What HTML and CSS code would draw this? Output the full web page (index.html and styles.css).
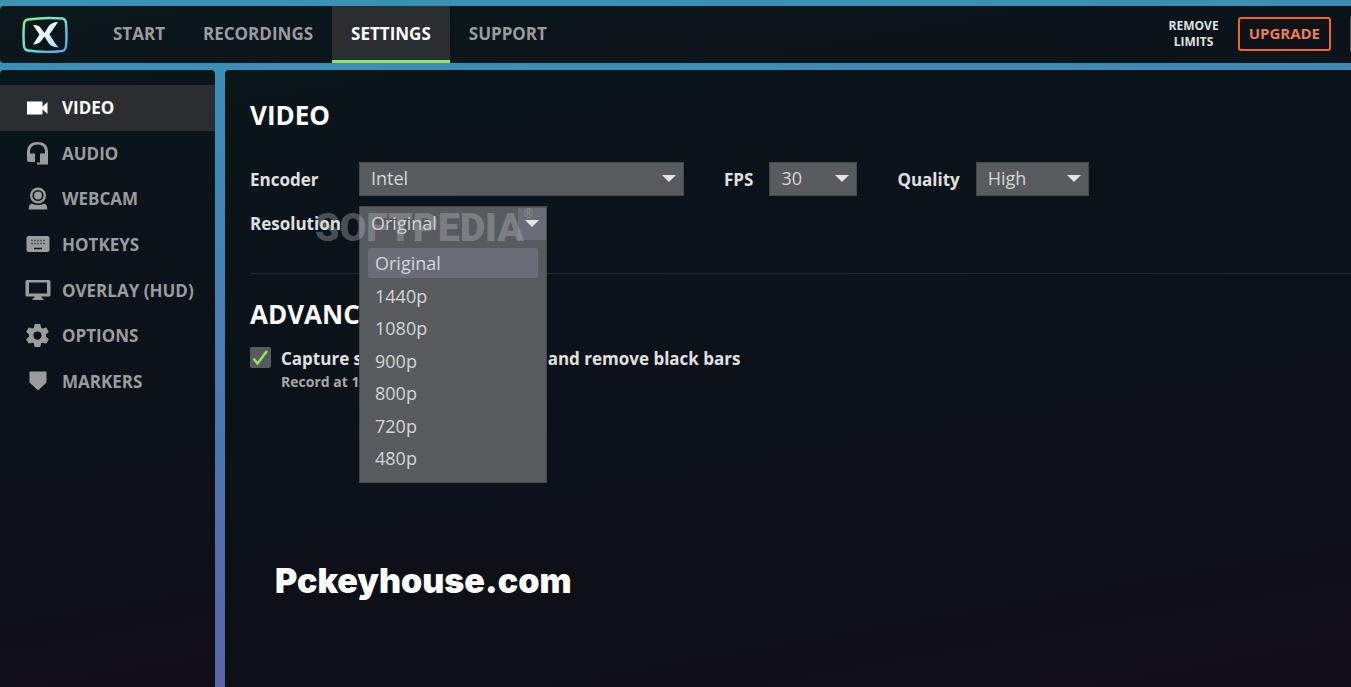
FILE: index.html
```html
<!DOCTYPE html>
<html lang="en">
<head>
    <meta charset="UTF-8">
    <meta name="viewport" content="width=device-width, initial-scale=1.0">
    <title>Settings - Video</title>
    <link rel="stylesheet" href="styles.css">
</head>
<body>
    <header class="topbar">
        <a class="logo" href="#" aria-label="Home">
            <svg width="46" height="38" viewBox="0 0 46 38">
                <defs>
                    <linearGradient id="frame" x1="0" y1="0" x2="1" y2="1">
                        <stop offset="0" stop-color="#7df08c"/>
                        <stop offset="0.5" stop-color="#6fe0d8"/>
                        <stop offset="1" stop-color="#45a8ee"/>
                    </linearGradient>
                    <linearGradient id="mark" x1="0" y1="0" x2="1" y2="1">
                        <stop offset="0.3" stop-color="#ffffff"/>
                        <stop offset="1" stop-color="#a5d8fb"/>
                    </linearGradient>
                </defs>
                <path d="M6 3.500Q23 1 40 2.500Q43.500 3 44 7Q45 19 44 30Q43.500 34.500 40 35Q23 37 6 34.500Q2.500 34 2 30Q1 19 2 8Q2.500 4 6 3.500Z" fill="none" stroke="url(#frame)" stroke-width="2.400"/>
                <path d="M11 9Q17 8.500 19.500 13L22.500 17L26.500 10.500Q29.500 6 36 6L33 10.500L27.500 18.500L33 27L36.500 31.500Q29 31 26.500 27L22.500 20.500L19.500 24.500Q16.500 28.500 11 28.500L17.500 18.500Z" fill="url(#mark)"/>
            </svg>
        </a>
        <nav class="tabs">
            <a href="#">START</a>
            <a href="#">RECORDINGS</a>
            <a class="active" href="#">SETTINGS</a>
            <a href="#">SUPPORT</a>
        </nav>
        <div class="account">
            <span class="limits">REMOVE<br>LIMITS</span>
            <button class="upgrade" type="button">UPGRADE</button>
            <span class="separator"></span>
        </div>
    </header>

    <div class="layout">
        <div class="sidebar">
            <nav class="links">
                <a class="active" href="#">
                    <svg width="26" height="26" viewBox="0 0 26 26"><path fill="currentColor" d="M2 6.500h15.500v5l5-4.500v12l-5-4.500v5H2z"/></svg>
                    VIDEO
                </a>
                <a href="#">
                    <svg width="26" height="26" viewBox="0 0 26 26"><path fill="currentColor" d="M2 20V11Q2.500 2 12.500 2T23 11V24.500H12V22.500H15V13.500H20V11Q19.500 4.500 12.500 4.500T5 11V13.500H10V22H4Q2 22 2 20Z"/></svg>
                    AUDIO
                </a>
                <a href="#">
                    <svg width="26" height="26" viewBox="0 0 26 26"><circle cx="13" cy="9.500" r="6.800" fill="none" stroke="currentColor" stroke-width="2.400"/><circle cx="13" cy="9.500" r="3.900" fill="currentColor"/><path fill="currentColor" d="M6.500 17.500Q13 20.500 19.500 17.500Q22.500 19 22.300 23.500H3.700Q3.500 19 6.500 17.500Z"/></svg>
                    WEBCAM
                </a>
                <a href="#">
                    <svg width="26" height="26" viewBox="0 0 26 26"><rect x="1.500" y="5" width="23" height="16" rx="2" fill="currentColor"/><path stroke="#50555a" stroke-width="1.600" stroke-dasharray="2 1" d="M6 9.500h14M6 12.500h14"/><path stroke="#0c141b" stroke-width="1.500" d="M9 17.500h8"/></svg>
                    HOTKEYS
                </a>
                <a href="#">
                    <svg width="26" height="26" viewBox="0 0 26 26"><path fill="currentColor" fill-rule="evenodd" d="M2 3H24Q25.500 3 25.500 4.500V18Q25.500 19.500 24 19.500H16.500L17 21.500H18.500V23H7.500V21.500H9L9.500 19.500H2Q.5 19.500.5 18V4.500Q.5 3 2 3ZM4 5.500V16.500H22V5.500Z"/></svg>
                    OVERLAY (HUD)
                </a>
                <a href="#">
                    <svg width="26" height="26" viewBox="0 0 24 24"><path fill="currentColor" stroke="currentColor" stroke-linejoin="round" d="M9.300 1.500h4.400l.7 3.200 1.800 1 3.100-1 2 3.400-2.400 2.200v2.600l2.400 2.200-2 3.400-3.100-1-1.800 1-.7 3.200H9.300l-.7-3.200-1.800-1-3.100 1-2-3.400 2.400-2.200v-2.600L1.700 8.100l2-3.400 3.100 1 1.800-1ZM11.500 7.300a4.300 4.300 0 1 0 0 8.600 4.300 4.300 0 0 0 0-8.600Z"/></svg>
                    OPTIONS
                </a>
                <a href="#">
                    <svg width="26" height="26" viewBox="0 0 26 26"><path fill="currentColor" d="M4.500 3.500h17v11l-8.500 8-8.500-8z"/></svg>
                    MARKERS
                </a>
            </nav>
        </div>

        <main class="panel">
            <h1>VIDEO</h1>
            <div class="row">
                <label class="name" for="encoder">Encoder</label>
                <select class="encoder" id="encoder"><option>Intel</option></select>
                <label class="side-label" for="fps">FPS</label>
                <select class="fps" id="fps"><option>30</option></select>
                <label class="side-label" for="quality">Quality</label>
                <select class="quality" id="quality"><option>High</option></select>
            </div>
            <div class="row">
                <label class="name" for="resolution">Resolution</label>
                <div class="dropdown">
                    <select class="resolution" id="resolution">
                        <option>Original</option>
                        <option>1440p</option>
                        <option>1080p</option>
                        <option>900p</option>
                        <option>800p</option>
                        <option>720p</option>
                        <option>480p</option>
                    </select>
                    <ul class="menu" role="listbox" aria-label="Resolution">
                        <li class="selected" role="option" aria-selected="true">Original</li>
                        <li role="option">1440p</li>
                        <li role="option">1080p</li>
                        <li role="option">900p</li>
                        <li role="option">800p</li>
                        <li role="option">720p</li>
                        <li role="option">480p</li>
                    </ul>
                    <span class="watermark">SOFTPEDIA<sup>®</sup></span>
                </div>
            </div>

            <section class="advanced">
                <h2>ADVANCED</h2>
                <div class="option">
                    <input type="checkbox" id="stretch" checked>
                    <label for="stretch">Capture stretched 4:3 contents and remove black bars
                        <small>Record at 16:9 aspect ratio</small>
                    </label>
                </div>
            </section>

            <p class="site">Pckeyhouse.com</p>
        </main>
    </div>
</body>
</html>
```
FILE: styles.css
```css
* {
    box-sizing: border-box;
}
body {
    margin: 0;
    padding-top: 6px;
    min-height: 100vh;
    display: flex;
    flex-direction: column;
    gap: 7px;
    overflow: hidden;
    background: linear-gradient(175deg, #3893b5 0%, #3f88b3 25%, #6060a8 96%);
    font-family: "Open Sans", "Noto Sans", sans-serif;
    font-size: 17px;
    color: #e0e0e0;
}
a {
    color: #9b9c9d;
    font-weight: bold;
    text-decoration: none;
}

/* top bar */
.topbar {
    display: flex;
    height: 57px;
    background: linear-gradient(170deg, #0a171b, #0c131a);
    border-radius: 4px 0 0 4px;
}
.logo {
    display: flex;
    align-items: center;
    padding-left: 22px;
    width: 94px;
}
.tabs {
    display: flex;
}
.tabs a {
    display: flex;
    align-items: center;
    padding: 0 19px;
    border-bottom: 3px solid transparent;
}
.tabs .active {
    color: #fff;
    background: #2a2e31;
    border-bottom-color: #95e463;
}
.account {
    display: flex;
    align-items: center;
    gap: 19px;
    margin-left: auto;
    padding-bottom: 2px;
}
.limits {
    font-size: 12px;
    font-weight: bold;
    line-height: 16px;
    text-align: center;
}
.upgrade {
    height: 34px;
    padding: 0 9px 2px;
    background: none;
    border: 2px solid #f06a0a;
    border-radius: 3px;
    color: #f47a50;
    font: bold 15px "Open Sans", sans-serif;
}
.separator {
    width: 1px;
    height: 34px;
    background: #555b60;
}

.layout {
    display: flex;
    flex: 1;
    gap: 10px;
}

/* sidebar */
.sidebar {
    flex: 0 0 215px;
    padding-top: 15px;
    background: linear-gradient(170deg, #09161a, #0b131a 30%, #0d1018 70%, #110d17);
    border-radius: 4px 4px 0 0;
}
.links {
    display: grid;
    grid-auto-rows: 1fr;
    height: 319px;
}
.links a {
    display: flex;
    align-items: center;
    gap: 11px;
    padding-left: 25px;
}
.links .active {
    color: #fff;
    background: #2a2e31;
}

/* settings panel */
.panel {
    flex: 1;
    padding: 27px 0 0 25px;
    background: linear-gradient(170deg, #09161a, #0b131a 25%, #0d1018 65%, #110d17);
    border-radius: 4px 0 0 0;
}
h1, h2 {
    margin: 0;
    font-size: 26px;
    line-height: 36px;
    color: #fff;
}
h1 {
    margin-bottom: 29px;
}
.row {
    display: flex;
    align-items: center;
    margin-bottom: 10px;
    font-weight: bold;
}
.name {
    width: 109px;
}
select {
    appearance: none;
    height: 34px;
    padding: 0 11px 2px;
    border: 1px solid #44494d;
    border-radius: 0;
    background: #575b5e url("data:image/svg+xml,%3Csvg xmlns='http://www.w3.org/2000/svg' width='14' height='8'%3E%3Cpath fill='%23e4e4e4' d='M0 0h14L7 7z'/%3E%3C/svg%3E") no-repeat right 7px center;
    color: #d4d6d7;
    font: 18px "Open Sans", sans-serif;
}
.encoder {
    width: 325px;
}
.side-label {
    margin: 0 16px 0 40px;
}
.fps {
    width: 88px;
}
.quality {
    width: 113px;
}
.dropdown {
    position: relative;
    width: 188px;
}
.resolution {
    width: 100%;
    border-bottom: 0;
    background-image: url("data:image/svg+xml,%3Csvg xmlns='http://www.w3.org/2000/svg' width='28' height='32'%3E%3Cpath fill='%23696d75' d='M0 0h28v32H0z'/%3E%3Cpath fill='%23e4e4e4' d='M7 12h14l-7 7z'/%3E%3C/svg%3E");
    background-position: right center;
}
.menu {
    position: absolute;
    top: 34px;
    left: 0;
    width: 100%;
    height: 243px;
    display: flex;
    flex-direction: column;
    justify-content: space-between;
    margin: 0;
    padding: 8px 8px 9px 8px;
    border: 1px solid #44494d;
    border-top: 0;
    background: #575b5e;
    list-style: none;
    font-size: 18px;
    font-weight: normal;
    line-height: 30px;
    color: #d4d6d7;
}
.menu li {
    padding-left: 7px;
}
.menu .selected {
    background: #696d75;
    border-radius: 2px;
}
.watermark {
    position: absolute;
    top: 2px;
    left: -44px;
    font: 900 39px/40px Roboto, sans-serif;
    color: rgba(190, 195, 200, 0.35);
    pointer-events: none;
}
.watermark sup {
    font-size: 12px;
    line-height: 12px;
    vertical-align: top;
}

/* advanced */
.advanced {
    margin-top: 33px;
    padding-top: 22px;
    border-top: 1px solid #24272b;
}
.option {
    display: flex;
    gap: 10px;
    margin-top: 15px;
}
.option input {
    appearance: none;
    flex: none;
    width: 21px;
    height: 21px;
    margin: 0;
    border-radius: 2px;
    background: #575b5e;
}
.option input:checked {
    background-image: url("data:image/svg+xml,%3Csvg xmlns='http://www.w3.org/2000/svg' width='21' height='21'%3E%3Cpath fill='none' stroke='%2395e463' stroke-width='2.400' d='M3.500 11.500l4 5L17 4'/%3E%3C/svg%3E");
}
.option label {
    font-weight: bold;
    line-height: 23px;
}
.option small {
    display: block;
    font-size: 14px;
    color: #a8a9ab;
}
.site {
    margin: 168px 0 0 25px;
    font: 900 34px/40px Inter, sans-serif;
    color: #fff;
}
```
